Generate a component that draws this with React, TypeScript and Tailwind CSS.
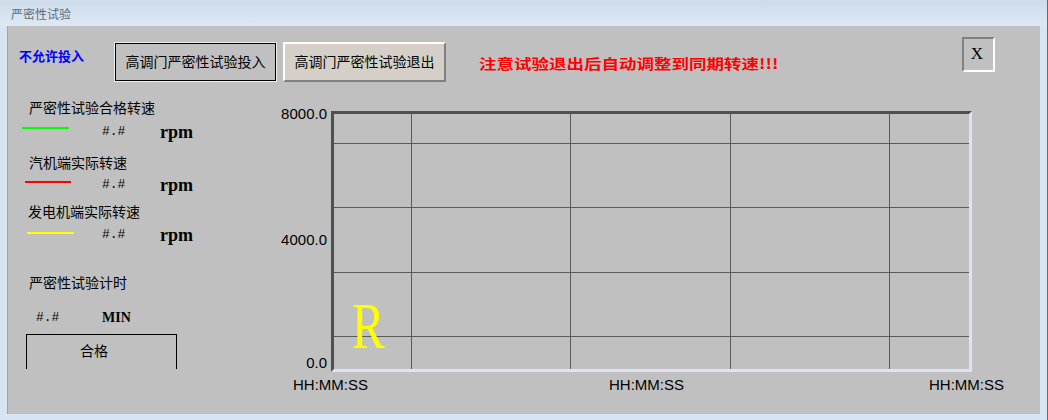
import React from 'react'

const cjk = "font-['Noto_Sans_CJK_SC',sans-serif]"
const mono = "font-['Liberation_Mono',monospace]"
const serif = "font-['Liberation_Serif',serif]"
const sans = "font-['Liberation_Sans',sans-serif]"

type SpeedProps = {
  label: string
  labelClass: string
  rowClass: string
  lineClass: string
}

// legend block: caption, then coloured line + value + unit
function SpeedItem({ label, labelClass, rowClass, lineClass }: SpeedProps) {
  return (
    <>
      <div className={`${labelClass} h-[14px] text-[14px] leading-[14px] text-black`}>{label}</div>
      <div className={`${rowClass} h-[14px] flex items-start`}>
        <div className="w-[94px]">
          <div className={`${lineClass} h-[2px]`} />
        </div>
        <div className={`w-[58px] ${mono} text-[13px] leading-[14px] text-black`}>#.#</div>
        <div className={`${serif} font-bold text-[18px] leading-[14px] text-black`}>rpm</div>
      </div>
    </>
  )
}

function Grid() {
  const xs = [77.5, 236.5, 396.5, 555.5]
  const ys = [29.5, 93.5, 158.5, 222.5]
  return (
    <svg width="635" height="255" className="block">
      {xs.map(x => (
        <line key={'x' + x} x1={x} y1={0} x2={x} y2={255} stroke="#5a5a5a" strokeWidth={1} />
      ))}
      {ys.map(y => (
        <line key={'y' + y} x1={0} y1={y} x2={635} y2={y} stroke="#5a5a5a" strokeWidth={1} />
      ))}
    </svg>
  )
}

export default function App() {
  return (
    <div className={`w-[1048px] h-[420px] bg-[#d7e4f2] border-r border-[#5f6b78] flex flex-col overflow-hidden ${cjk}`}>
      {/* title bar */}
      <div className="h-[26px] shrink-0 pl-[11px] pt-[2px] flex items-center bg-linear-to-b from-[#cddbea] to-[#dde8f4] text-[12px] text-[#5d6a78]">
        严密性试验
      </div>

      {/* window body */}
      <div className="ml-[7px] mr-[7px] h-[388px] shrink-0 border-l border-[#9aa6b3] bg-[#c0c0c0] flex flex-col">
        {/* top row */}
        <div className="flex items-start pt-[11px]">
          <div className="ml-[11px] w-[95px] mt-[12px] text-[13px] leading-[13px] font-bold text-[#0000ff]">不允许投入</div>
          <div className="mt-[5px] w-[163px] h-[40px] border border-[#eeeeee] flex">
            <div className="flex-1 border border-black flex items-center justify-center pb-[2px] text-[14px] leading-[14px] text-black">
              高调门严密性试验投入
            </div>
          </div>
          <div className="ml-[6px] mt-[5px] w-[163px] h-[40px] bg-[#d4d0c8] border-2 border-t-white border-l-white border-r-[#808080] border-b-[#808080] flex items-center justify-center pb-[2px] text-[14px] leading-[14px] text-black">
            高调门严密性试验退出
          </div>
          <div className="ml-[33px] mt-[19px] text-[14px] leading-[14px] font-bold text-[#ff0000] scale-x-125 origin-left whitespace-nowrap">
            注意试验退出后自动调整到同期转速!!!
          </div>
          <div className={`ml-auto mr-[45px] w-[33px] h-[35px] border-2 border-t-[#808080] border-l-[#808080] border-r-white border-b-white flex items-center justify-center pr-[3px] pb-[2px] ${serif} text-[17px] leading-[17px] text-black`}>
            X
          </div>
        </div>

        {/* main area */}
        <div className="flex">
          <div className="w-[260px] flex flex-col">
            <SpeedItem
              label="严密性试验合格转速"
              labelClass="mt-[18px] pl-[21px]"
              rowClass="mt-[11px]"
              lineClass="mt-[2px] ml-[14px] w-[47px] bg-[#00ff00]"
            />
            <SpeedItem
              label="汽机端实际转速"
              labelClass="mt-[16px] pl-[21px]"
              rowClass="mt-[9px]"
              lineClass="mt-[3px] ml-[17px] w-[46px] bg-[#ff0000]"
            />
            <SpeedItem
              label="发电机端实际转速"
              labelClass="mt-[12px] pl-[20px]"
              rowClass="mt-[10px]"
              lineClass="mt-[4px] ml-[19px] w-[47px] bg-[#ffff00]"
            />

            <div className="mt-[33px] pl-[21px] h-[14px] text-[14px] leading-[14px] text-black">严密性试验计时</div>
            <div className="mt-[22px] h-[14px] flex items-start">
              <div className={`ml-[28px] w-[66px] ${mono} text-[13px] leading-[14px] text-black`}>#.#</div>
              <div className={`${serif} font-bold text-[14px] leading-[14px] text-black`}>MIN</div>
            </div>
            <div className="mt-[9px] ml-[18px] w-[151px] h-[35px] border-t border-l border-r border-black pl-[53px] pt-[8px] text-[14px] leading-[14px] text-black">
              合格
            </div>
          </div>

          {/* chart */}
          <div className={`flex-1 flex flex-col pt-[29px] ${sans} text-black`}>
            <div className="flex items-start">
              <div className="w-[59px] -mt-[5px] flex flex-col items-end text-[15px] leading-[15px]">
                <div>8000.0</div>
                <div className="mt-[111px]">4000.0</div>
                <div className="mt-[108px]">0.0</div>
              </div>
              <div className="ml-[4px] w-[641px] h-[261px] relative border-[3px] border-t-[#505050] border-l-[#505050] border-r-[#e2e0f4] border-b-[#e2e0f4]">
                <Grid />
                <div className={`absolute left-[18px] top-[179px] ${serif} text-[66px] leading-none text-[#ffff00] scale-x-[0.74] origin-left`}>
                  R
                </div>
              </div>
            </div>
            <div className="flex mt-[5px] text-[15px] leading-[15px]">
              <div className="ml-[25px] w-[316px]">HH:MM:SS</div>
              <div className="w-[320px]">HH:MM:SS</div>
              <div>HH:MM:SS</div>
            </div>
          </div>
        </div>
      </div>
    </div>
  )
}
